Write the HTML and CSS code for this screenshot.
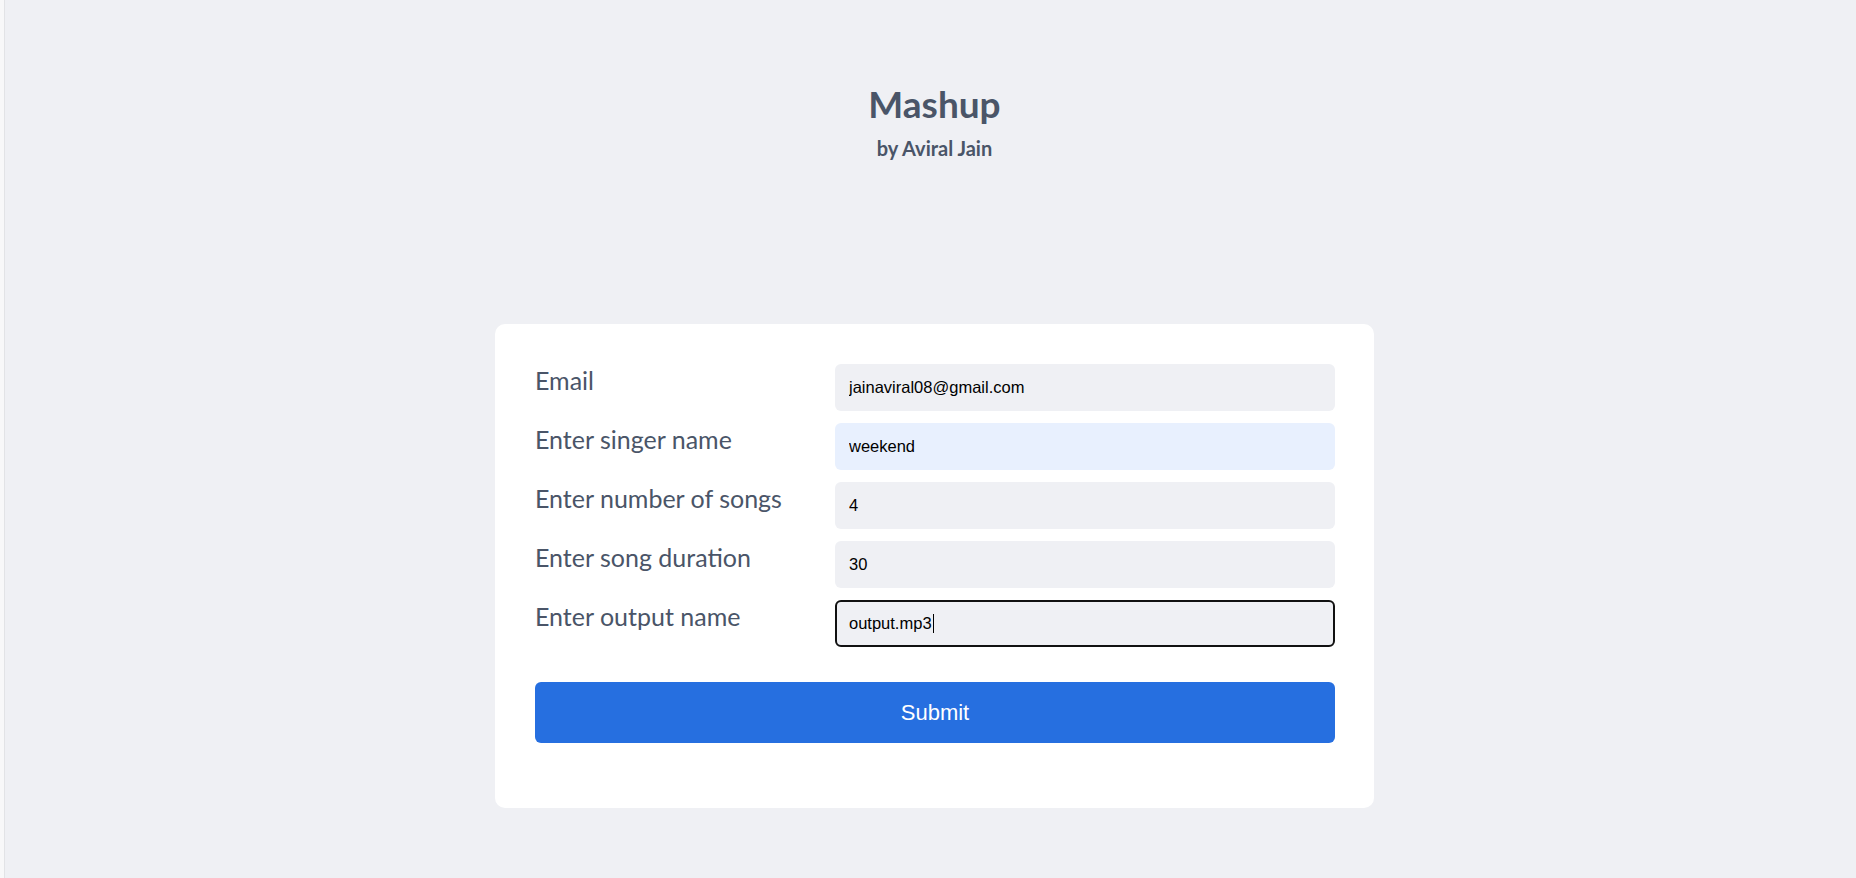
FILE: index.html
```html
<!DOCTYPE html>
<html lang="en">
<head>
<meta charset="utf-8">
<title>Mashup</title>
<link rel="stylesheet" href="styles.css">
</head>
<body>
<div class="page">
  <header class="hero">
    <h1 class="title">Mashup</h1>
    <p class="subtitle">by Aviral Jain</p>
  </header>
  <main class="card">
    <form class="form">
      <div class="row">
        <label class="label" for="email">Email</label>
        <input class="field" id="email" type="text" value="jainaviral08@gmail.com">
      </div>
      <div class="row">
        <label class="label" for="singer">Enter singer name</label>
        <input class="field field-autofill" id="singer" type="text" value="weekend">
      </div>
      <div class="row">
        <label class="label" for="count">Enter number of songs</label>
        <input class="field" id="count" type="text" value="4">
      </div>
      <div class="row">
        <label class="label" for="duration">Enter song duration</label>
        <input class="field" id="duration" type="text" value="30">
      </div>
      <div class="row">
        <label class="label" for="output">Enter output name</label>
        <div class="field field-focus"><span>output.mp3</span><span class="caret"></span></div>
      </div>
      <button class="submit" type="button">Submit</button>
    </form>
  </main>
</div>
</body>
</html>
```

FILE: styles.css
```css
html, body {
  margin: 0;
  padding: 0;
  background: #eff0f4;
}

.page {
  min-height: 878px;
  box-sizing: border-box;
  border-left: 4px solid #f8f8f9;
  box-shadow: inset 1px 0 0 #e2e3e6;
  padding-left: 9px;
  font-family: Lato, "Liberation Sans", sans-serif;
  color: #4a5568;
}

.hero {
  padding-top: 86px;
  text-align: center;
}

.title {
  margin: 0;
  font-size: 37px;
  line-height: 36px;
  font-weight: 700;
}

.subtitle {
  margin: 14px 0 0;
  font-size: 20px;
  line-height: 24px;
  font-weight: 700;
}

.card {
  width: 879px;
  box-sizing: border-box;
  margin: 164px auto 0;
  background: #ffffff;
  border-radius: 10px;
  padding: 40px 40px 65px;
}

.form {
  display: flex;
  flex-direction: column;
}

.row {
  display: grid;
  grid-template-columns: 300px 500px;
  margin-bottom: 12px;
}

.label {
  font-size: 25px;
  line-height: 29px;
  padding-top: 2px;
  font-weight: 400;
  color: #4a5568;
}

.field {
  box-sizing: border-box;
  height: 47px;
  width: 500px;
  border: 2px solid transparent;
  border-radius: 6px;
  background: #eff0f4;
  padding: 0 12px;
  font-family: "Liberation Sans", Arial, sans-serif;
  font-size: 16.5px;
  color: #000;
  outline: none;
  display: flex;
  align-items: center;
}

.field-autofill {
  background: #e8f0fe;
}

.field-focus {
  border-color: #111111;
}

.caret {
  display: inline-block;
  width: 1px;
  height: 19px;
  background: #000;
  margin-left: 1px;
}

.submit {
  margin-top: 23px;
  height: 61px;
  width: 800px;
  border: none;
  border-radius: 6px;
  background: #266fe0;
  color: #ffffff;
  font-family: "Liberation Sans", Arial, sans-serif;
  font-size: 22px;
  cursor: pointer;
}
```
